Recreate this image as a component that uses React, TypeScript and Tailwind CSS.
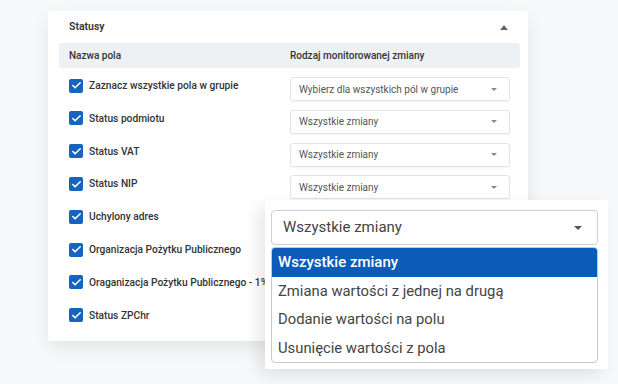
import { Check } from "lucide-react";

const rows = [
    { label: "Zaznacz wszystkie pola w grupie", value: "Wybierz dla wszystkich pól w grupie" },
    { label: "Status podmiotu", value: "Wszystkie zmiany" },
    { label: "Status VAT", value: "Wszystkie zmiany" },
    { label: "Status NIP", value: "Wszystkie zmiany" },
    { label: "Uchylony adres", value: "Wszystkie zmiany" },
    { label: "Organizacja Pożytku Publicznego", value: "Wszystkie zmiany" },
    { label: "Oraganizacja Pożytku Publicznego - 1%", value: "Wszystkie zmiany" },
    { label: "Status ZPChr", value: "Wszystkie zmiany" },
];

const options = [
    "Wszystkie zmiany",
    "Zmiana wartości z jednej na drugą",
    "Dodanie wartości na polu",
    "Usunięcie wartości z pola",
];

function Caret({ className }: { className?: string }) {
    return (
        <svg viewBox="0 0 10 5" className={className} fill="currentColor">
            <path d="M0 0h10L5 5z" />
        </svg>
    );
}

export default function App() {
    return (
        <div className="relative h-[384px] w-[618px] overflow-hidden bg-[#f8f9fb] font-['Roboto',sans-serif]">
            <div className="ml-[48px] mt-[11px] h-[330px] w-[480px] bg-white pl-[11px] pr-[8px] shadow-[0_6px_18px_rgba(0,0,0,0.09)]">
                <div className="flex h-[32px] items-center justify-between pl-[10px] pr-[12px]">
                    <span className="text-[10.5px] font-semibold text-[#333]">Statusy</span>
                    <svg viewBox="0 0 10 6" className="h-[5px] w-[8px] text-[#666]" fill="currentColor">
                        <path d="M5 0l5 6H0z" />
                    </svg>
                </div>
                <div className="flex h-[25px] items-center rounded-[3px] bg-[#eef1f4] pl-[10px] text-[10px] font-medium text-[#333]">
                    <span className="w-[221px]">Nazwa pola</span>
                    <span>Rodzaj monitorowanej zmiany</span>
                </div>
                <div className="pt-[1px]">
                    {rows.map((r) => (
                        <div key={r.label} className="flex h-[32.8px] items-start pl-[10px]">
                            <div className="mt-[9px] flex w-[221px] items-center gap-[6px]">
                                <span className="flex h-[14px] w-[14px] shrink-0 items-center justify-center rounded-[2px] bg-[#1565c0]">
                                    <Check className="h-[11px] w-[11px] text-white" strokeWidth={3.5} />
                                </span>
                                <span className="whitespace-nowrap text-[10.2px] font-medium text-[#333]">{r.label}</span>
                            </div>
                            <div className="mt-[8px] flex h-[24px] w-[220px] items-center justify-between rounded-[3px] border border-[#e3e3e3] pl-[8px] pr-[12px] text-[10px] text-[#555] shadow-[0_1px_2px_rgba(0,0,0,0.05)]">
                                <span>{r.value}</span>
                                <Caret className="h-[3px] w-[6px] text-[#888]" />
                            </div>
                        </div>
                    ))}
                </div>
            </div>

            {/* open dropdown */}
            <div className="absolute left-[265px] top-[200px] h-[169px] w-[343px] bg-white pl-[6px] pr-[10px] pt-[10px] shadow-[-6px_6px_16px_rgba(0,0,0,0.1)]">
                <div className="flex h-[35px] items-center justify-between rounded-[4px] border border-[#cfcfcf] pl-[11px] pr-[15px] text-[15px] text-[#444]">
                    <span>Wszystkie zmiany</span>
                    <Caret className="h-[4px] w-[8px] text-[#555]" />
                </div>
                <div className="mt-[2px] overflow-hidden rounded-[4px] border border-[#c8c8c8]">
                    {options.map((o, i) => (
                        <div
                            key={o}
                            className={
                                i === 0
                                    ? "flex h-[28.5px] items-center bg-[#0b5cb8] pl-[6px] text-[15px] font-medium text-white"
                                    : "flex h-[28.5px] items-center pl-[6px] text-[14.8px] text-[#444]"
                            }
                        >
                            {o}
                        </div>
                    ))}
                </div>
            </div>
        </div>
    );
}
